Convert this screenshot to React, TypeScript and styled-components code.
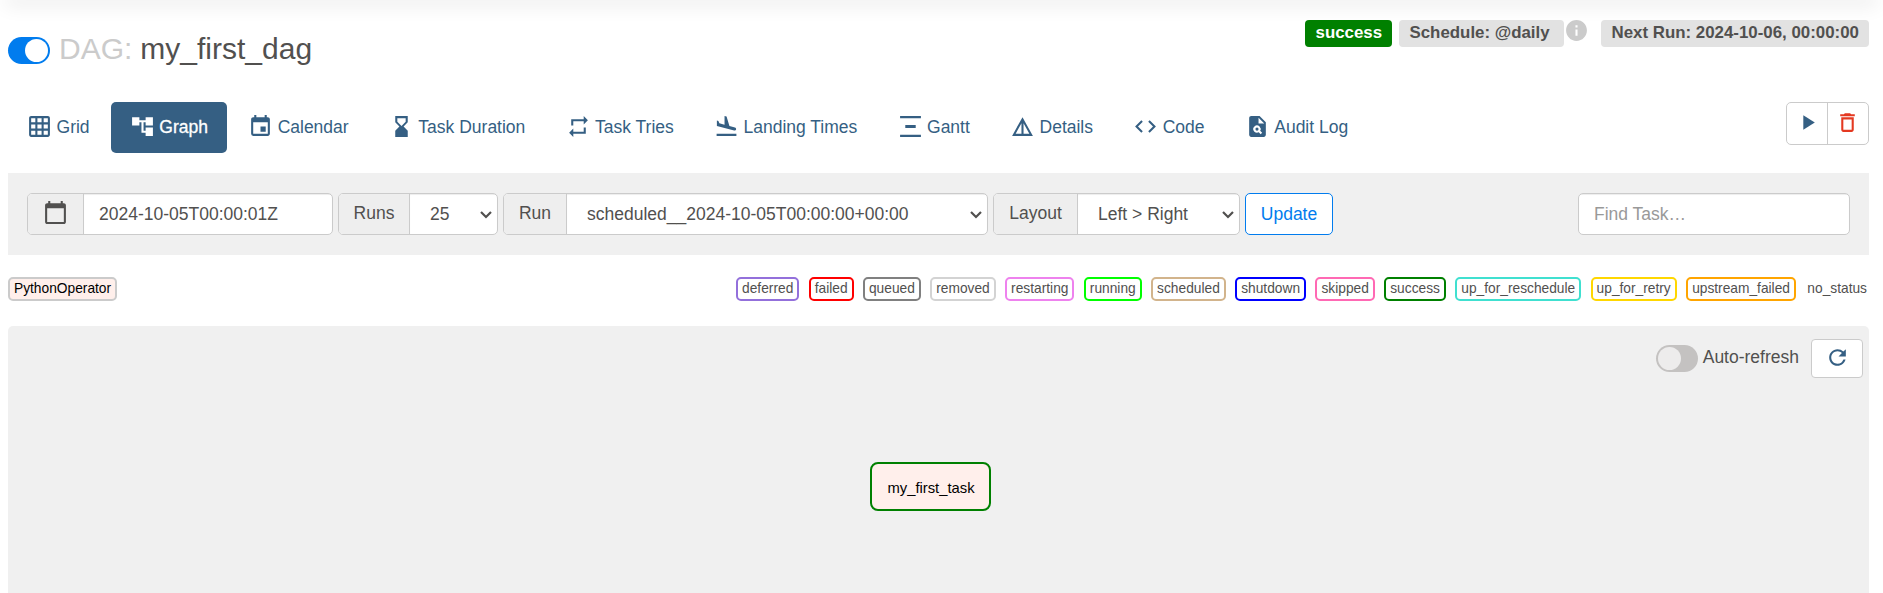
import React from "react";
import styled, { createGlobalStyle, css } from "styled-components";
import {
  MdGridOn, MdAccountTree, MdEvent, MdHourglassBottom, MdRepeat, MdFlightLand,
  MdVerticalDistribute, MdDetails, MdCode, MdPlagiarism, MdPlayArrow,
  MdDeleteOutline, MdRefresh, MdCalendarToday, MdInfo,
} from "react-icons/md";

const ink = "#51504f";
const navy = "#355f83";
const line = "#cbcbcb";

const Global = createGlobalStyle`
  *, *::before, *::after { box-sizing: border-box; }
  body {
    margin: 0;
    overflow: hidden;
    background: #fff;
    color: ${ink};
    font: 17.5px/25px "Liberation Sans", Arial, sans-serif;
  }
  svg { display: block; flex: none; }
`;

const Page = styled.div`
  height: 593px;
  padding: 0 14px 0 8px;
  display: flex;
  flex-direction: column;
`;

const NavbarShadow = styled.div`
  height: 0;
  margin: 0 -6px 0 0;
  box-shadow: 0 0 19px 3px rgba(0, 0, 0, 0.16);
`;

const Header = styled.header`
  height: 102px;
  padding-top: 20px;
  display: flex;
  justify-content: space-between;
  align-items: flex-start;
`;

const Title = styled.h3`
  margin: 12px 0 0;
  display: flex;
  align-items: center;
  font-size: 30px;
  line-height: 34px;
  font-weight: 400;
`;

const Muted = styled.span`
  color: ${line};
  margin: 0 8px 0 9px;
`;

const Switch = styled.span<{ $on?: boolean }>`
  width: 42px;
  height: 27px;
  margin-top: ${(p) => (p.$on ? 3 : 0)}px;
  padding: 2px;
  border-radius: 14px;
  display: flex;
  justify-content: ${(p) => (p.$on ? "flex-end" : "flex-start")};
  background: ${(p) => (p.$on ? "#017cee" : "#c4c2c1")};
  &::after {
    content: "";
    width: 23px;
    height: 23px;
    border-radius: 50%;
    background: ${(p) => (p.$on ? "#fff" : "#edecec")};
  }
`;

const Labels = styled.div`
  display: flex;
  align-items: flex-start;
`;

const Label = styled.span<{ $success?: boolean; $width: number }>`
  width: ${(p) => p.$width}px;
  height: 27px;
  padding-left: 10.5px;
  border-radius: 4px;
  font-size: 16.875px;
  line-height: 25px;
  font-weight: 700;
  white-space: nowrap;
  color: ${(p) => (p.$success ? "#fff" : ink)};
  background: ${(p) => (p.$success ? "#008000" : "#e2e2e2")};
  & + & { margin-left: 7px; }
`;

const Info = styled.span`
  margin: -2px 12px 0 0;
  color: ${line};
`;

const NavRow = styled.div`
  display: flex;
  justify-content: space-between;
  align-items: flex-start;
  height: 71px;
`;

const Nav = styled.nav`
  display: flex;
  gap: 2.4px;
`;

const NavItem = styled.a<{ $active?: boolean }>`
  height: 51px;
  padding: 0 18.75px 1px 19.25px;
  display: flex;
  align-items: center;
  gap: 4.3px;
  border-radius: 5px;
  color: ${(p) => (p.$active ? "#fff" : navy)};
  background: ${(p) => (p.$active ? navy : "transparent")};
  white-space: nowrap;
  ${(p) => p.$active && css`-webkit-text-stroke: 0.3px #fff;`}
  svg { margin-bottom: 1px; }
`;

const Actions = styled.div`
  display: flex;
  height: 43px;
  border: 1px solid ${line};
  border-radius: 5px;
`;

const Action = styled.button<{ $danger?: boolean }>`
  width: ${(p) => (p.$danger ? 41 : 40)}px;
  padding: 0 ${(p) => (p.$danger ? 1 : 0)}px 3px 0;
  display: flex;
  align-items: center;
  justify-content: center;
  border: 0;
  background: none;
  color: ${(p) => (p.$danger ? "#e43921" : navy)};
  & + & { border-left: 1px solid ${line}; }
`;

const FilterBar = styled.div`
  height: 82px;
  padding: 20px 19px 0;
  display: flex;
  gap: 5px;
  background: #f0f0f0;
`;

const Group = styled.div<{ $width: number }>`
  width: ${(p) => p.$width}px;
  height: 42px;
  display: flex;
  overflow: hidden;
  border: 1px solid ${line};
  border-radius: 5px;
  background: #fff;
`;

const Addon = styled.span<{ $width: number }>`
  width: ${(p) => p.$width}px;
  flex: none;
  padding-bottom: 2px;
  display: flex;
  align-items: center;
  justify-content: center;
  border-right: 1px solid ${line};
  background: #eee;
  svg { margin-bottom: 1px; }
`;

const Field = styled.span<{ $indent?: number; $placeholder?: boolean }>`
  flex: 1;
  padding: 0 1px 0 ${(p) => p.$indent ?? 15}px;
  display: flex;
  align-items: center;
  justify-content: space-between;
  white-space: nowrap;
  color: ${(p) => (p.$placeholder ? "#999" : ink)};
  box-shadow: inset 0 1px 1px rgba(0, 0, 0, 0.075);
`;

const Update = styled.button`
  width: 88px;
  height: 42px;
  padding: 0;
  border: 1px solid #017cee;
  border-radius: 5px;
  background: #fff;
  color: #017cee;
  font: inherit;
`;

const Spacer = styled.div`
  flex: 1;
`;

const Legend = styled.div`
  height: 71px;
  padding-top: 22px;
  display: flex;
  align-items: flex-start;
  gap: 9.4px;
`;

const Tag = styled.span<{ $color?: string; $operator?: boolean }>`
  height: 24px;
  padding: ${(p) => (p.$color ? "0 4px" : "2px 2px 0")};
  border: ${(p) => (p.$color ? `2px solid ${p.$color}` : "0")};
  border-radius: 5px;
  font-size: 13.75px;
  line-height: 19px;
  white-space: nowrap;
  color: ${(p) => (p.$operator ? "#000" : ink)};
  background: ${(p) => (p.$operator ? "#ffefeb" : "#fff")};
`;

const Graph = styled.main`
  flex: 1;
  display: flex;
  flex-direction: column;
  align-items: center;
  border-radius: 5px 5px 0 0;
  background: #f0f0f0;
`;

const RefreshRow = styled.div`
  align-self: stretch;
  height: 136px;
  padding: 13px 6px 0 0;
  display: flex;
  justify-content: flex-end;
  align-items: flex-start;
`;

const AutoRefresh = styled.label`
  margin: 6px 12px 0 0;
  display: flex;
  gap: 4.5px;
  line-height: 24px;
`;

const RefreshButton = styled.button`
  width: 52px;
  height: 39px;
  padding: 0 0 2px;
  display: flex;
  align-items: center;
  justify-content: center;
  border: 1px solid ${line};
  border-radius: 4px;
  background: #fff;
  color: ${navy};
`;

const Node = styled.div`
  width: 121px;
  height: 49px;
  margin-right: 17px;
  padding: 3px 0 0 2px;
  display: flex;
  align-items: center;
  justify-content: center;
  border: 2px solid #008000;
  border-radius: 8px;
  background: #ffefeb;
  color: #000;
  font-size: 14.8px;
`;

const Chevron = () => (
  <svg width="20" height="20" viewBox="0 0 20 20" fill="none" stroke={ink} strokeWidth="2.2">
    <path d="M5 8l5 5 5-5" />
  </svg>
);

const tabs = [
  { name: "Grid", Icon: MdGridOn },
  { name: "Graph", Icon: MdAccountTree },
  { name: "Calendar", Icon: MdEvent },
  { name: "Task Duration", Icon: MdHourglassBottom },
  { name: "Task Tries", Icon: MdRepeat },
  { name: "Landing Times", Icon: MdFlightLand },
  { name: "Gantt", Icon: MdVerticalDistribute },
  { name: "Details", Icon: MdDetails },
  { name: "Code", Icon: MdCode },
  { name: "Audit Log", Icon: MdPlagiarism },
];

const states: [string, string?][] = [
  ["deferred", "mediumpurple"],
  ["failed", "red"],
  ["queued", "gray"],
  ["removed", "lightgrey"],
  ["restarting", "violet"],
  ["running", "lime"],
  ["scheduled", "tan"],
  ["shutdown", "blue"],
  ["skipped", "hotpink"],
  ["success", "green"],
  ["up_for_reschedule", "turquoise"],
  ["up_for_retry", "gold"],
  ["upstream_failed", "orange"],
  ["no_status"],
];

export default function App() {
  return (
    <Page>
      <Global />
      <NavbarShadow />
      <Header>
        <Title>
          <Switch $on />
          <Muted>DAG:</Muted>
          <span>my_first_dag</span>
        </Title>
        <Labels>
          <Label $success $width={87}>success</Label>
          <Label $width={165}>Schedule: @daily</Label>
          <Info><MdInfo size={25} /></Info>
          <Label $width={268}>Next Run: 2024-10-06, 00:00:00</Label>
        </Labels>
      </Header>
      <NavRow>
        <Nav>
          {tabs.map(({ name, Icon }) => (
            <NavItem key={name} $active={name === "Graph"}>
              <Icon size={25} />
              {name}
            </NavItem>
          ))}
        </Nav>
        <Actions>
          <Action><MdPlayArrow size={25} /></Action>
          <Action $danger><MdDeleteOutline size={25} /></Action>
        </Actions>
      </NavRow>
      <FilterBar>
        <Group $width={306}>
          <Addon $width={56}><MdCalendarToday size={25} /></Addon>
          <Field>2024-10-05T00:00:01Z</Field>
        </Group>
        <Group $width={160}>
          <Addon $width={71}>Runs</Addon>
          <Field $indent={20}>25<Chevron /></Field>
        </Group>
        <Group $width={485}>
          <Addon $width={63}>Run</Addon>
          <Field $indent={20}>scheduled__2024-10-05T00:00:00+00:00<Chevron /></Field>
        </Group>
        <Group $width={247}>
          <Addon $width={84}>Layout</Addon>
          <Field $indent={20}>Left &gt; Right<Chevron /></Field>
        </Group>
        <Update>Update</Update>
        <Spacer />
        <Group $width={272}>
          <Field $placeholder>Find Task…</Field>
        </Group>
      </FilterBar>
      <Legend>
        <Tag $color={line} $operator>PythonOperator</Tag>
        <Spacer />
        {states.map(([name, color]) => (
          <Tag key={name} $color={color}>{name}</Tag>
        ))}
      </Legend>
      <Graph>
        <RefreshRow>
          <AutoRefresh>
            <Switch />
            Auto-refresh
          </AutoRefresh>
          <RefreshButton><MdRefresh size={25} /></RefreshButton>
        </RefreshRow>
        <Node>my_first_task</Node>
      </Graph>
    </Page>
  );
}
